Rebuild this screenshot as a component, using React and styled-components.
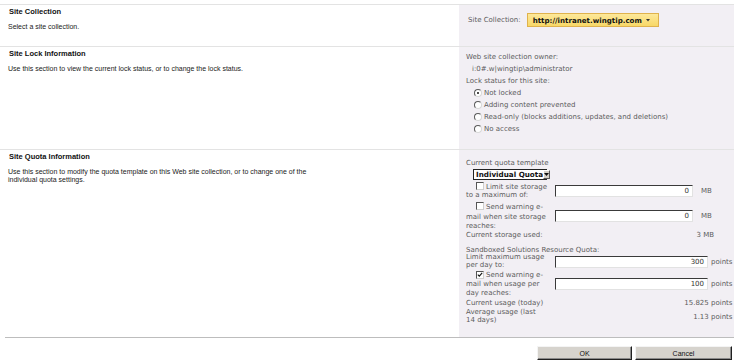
import React from 'react';
import styled, { createGlobalStyle } from 'styled-components';

const GlobalStyle = createGlobalStyle`
  html, body { margin: 0; padding: 0; background: #fff; }
  body {
    font-family: "DejaVu Sans", Verdana, sans-serif;
    -webkit-font-smoothing: antialiased;
  }
`;

const Page = styled.div`
  width: 734px;
  padding-top: 4px;
`;

const Section = styled.div`
  display: grid;
  grid-template-columns: 459px 275px;
  border-top: 1px solid #e3e3e3;
  min-height: ${p => p.$h}px;
`;

const Info = styled.div`
  padding: 3px 0 0 8px;
  font-family: "Liberation Sans", Tahoma, sans-serif;
  color: #222;
`;

const InfoTitle = styled.div`
  font-weight: bold;
  font-size: 7.5px;
  line-height: 8px;
  margin: 0 0 7px 1px;
  color: #111;
`;

const InfoText = styled.div`
  font-size: 7px;
  line-height: 7.6px;
  max-width: 305px;
`;

const Panel = styled.div`
  background: #f2eff4;
  padding: ${p => p.$pad};
  font-size: 7px;
  color: #5c5c5c;
`;

const Inline = styled.div`
  display: flex;
  align-items: center;
  gap: 6px;
  padding-left: 9px;
`;

const SiteDropdown = styled.div`
  height: 12px;
  display: flex;
  align-items: center;
  gap: 4px;
  padding: 0 8px 0 5px;
  background: linear-gradient(#fde89a, #f8d867);
  border: 1px solid #dfb24d;
  font-weight: bold;
  font-size: 7.1px;
  color: #111;
`;

const Line = styled.div`
  line-height: 11.8px;
  padding-left: ${p => p.$indent || 0}px;
`;

const RadioRow = styled.div`
  display: flex;
  align-items: center;
  gap: 2px;
  height: 11.8px;
  padding-left: 8px;
`;

const Radio = styled.span`
  position: relative;
  width: 6px;
  height: 6px;
  border-radius: 50%;
  background: #fff;
  border: 1px solid;
  border-color: #5a5a5a #d8d8d8 #d8d8d8 #5a5a5a;
  &::after {
    content: '';
    display: ${p => (p.$on ? 'block' : 'none')};
    position: absolute;
    left: 2px;
    top: 2px;
    width: 2px;
    height: 2px;
    border-radius: 50%;
    background: #111;
  }
`;

const Check = styled.span`
  display: inline-flex;
  align-items: center;
  justify-content: center;
  width: 6px;
  height: 6px;
  background: #fff;
  border: 1px solid;
  border-color: #555 #cfcfcf #cfcfcf #555;
  margin: 0 2px 0 10px;
  vertical-align: -1px;
`;

const SelectBox = styled.div`
  display: flex;
  align-items: center;
  justify-content: space-between;
  width: 72px;
  margin: 2px 0 0 7px;
  height: 9px;
  border: 1px solid #222;
  background: #fff;
  color: #111;
  font-size: 7.2px;
  font-weight: bold;
`;

const SelectText = styled.span`
  padding-left: 2px;
  white-space: nowrap;
`;

const SelectArrow = styled.span`
  display: flex;
  align-items: center;
  justify-content: center;
  width: 8px;
  height: 7px;
  margin-right: 1px;
  background: #d4d0c8;
  border: 1px solid;
  border-color: #fff #555 #555 #fff;
`;

const QuotaGrid = styled.div`
  display: grid;
  grid-template-columns: 89px ${p => p.$box}px auto;
  width: ${p => p.$w}px;
  align-items: center;
  margin-top: ${p => p.$top || 0}px;
`;

const Label = styled.div`
  min-height: ${p => p.$h || 0}px;
  display: flex;
  flex-direction: column;
  justify-content: center;
  white-space: nowrap;
`;

const SubLine = styled.div`
  line-height: ${p => p.$lh || 7.8}px;
`;

const Field = styled.div`
  height: 10px;
  background: #fff;
  border: 1px solid;
  border-color: #3a3a3a #e2e2e2 #e2e2e2 #3a3a3a;
  text-align: right;
  padding-right: 3px;
  line-height: 10px;
  color: #333;
`;

const Unit = styled.div`
  padding-left: ${p => p.$pad}px;
  white-space: nowrap;
`;

const Value = styled.div`
  grid-column: 2 / 4;
  text-align: right;
`;

const Heading = styled.div`
  line-height: 8px;
  margin-top: ${p => p.$top || 0}px;
`;

const Footer = styled.div`
  margin-left: 5px;
  border-top: 1px solid #bdbdbd;
  box-shadow: 0 1px 0 #e2e2e2;
  display: flex;
  justify-content: flex-end;
  gap: 3px;
  padding: 8px 2px 0 0;
`;

const Button = styled.button`
  width: ${p => p.$w}px;
  height: 14px;
  padding: 0;
  background: #d6d3cd;
  border: 1px solid;
  border-color: #f4f4f4 #202020 #202020 #f4f4f4;
  box-shadow: inset -1px -1px 0 #8a8a8a;
  font-family: "Liberation Sans", Tahoma, sans-serif;
  font-size: 7px;
  color: #111;
`;

function Tick() {
  return (
    <svg width="6" height="6" viewBox="0 0 6 6">
      <path d="M0.8 2.6 L2.3 4.2 L5.2 0.9" stroke="#111" strokeWidth="1.1" fill="none" />
    </svg>
  );
}

export default function App() {
  const lockOptions = [
    ['Not locked', true],
    ['Adding content prevented', false],
    ['Read-only (blocks additions, updates, and deletions)', false],
    ['No access', false],
  ];

  return (
    <Page>
      <GlobalStyle />
      <Section $h={41}>
        <Info>
          <InfoTitle>Site Collection</InfoTitle>
          <InfoText>Select a site collection.</InfoText>
        </Info>
        <Panel $pad="8px 0 0 0">
          <Inline>
            <span>Site Collection:</span>
            <SiteDropdown>
              <span>http://intranet.wingtip.com</span>
              <svg width="4" height="3" viewBox="0 0 4 3"><path d="M0 0 H4 L2 2.5 Z" fill="#333" /></svg>
            </SiteDropdown>
          </Inline>
        </Panel>
      </Section>

      <Section $h={102}>
        <Info>
          <InfoTitle>Site Lock Information</InfoTitle>
          <InfoText>Use this section to view the current lock status, or to change the lock status.</InfoText>
        </Info>
        <Panel $pad="5px 0 0 7px">
          <Line>Web site collection owner:</Line>
          <Line $indent={6}>i:0#.w|wingtip{'\\'}administrator</Line>
          <Line>Lock status for this site:</Line>
          {lockOptions.map(([text, on]) => (
            <RadioRow key={text}>
              <Radio $on={on} />
              <span>{text}</span>
            </RadioRow>
          ))}
        </Panel>
      </Section>

      <Section $h={187}>
        <Info>
          <InfoTitle>Site Quota Information</InfoTitle>
          <InfoText>
            Use this section to modify the quota template on this Web site collection, or to change one of the
            individual quota settings.
          </InfoText>
        </Info>
        <Panel $pad="9px 0 0 7px">
          <Heading>Current quota template</Heading>
          <SelectBox>
            <SelectText>Individual Quota</SelectText>
            <SelectArrow>
              <svg width="5" height="3" viewBox="0 0 5 3"><path d="M0 0 H5 L2.5 3 Z" fill="#111" /></svg>
            </SelectArrow>
          </SelectBox>

          <QuotaGrid $box={138} $w={248} $top={1}>
            <Label $h={20}>
              <SubLine $lh={10}><Check />Limit site storage</SubLine>
              <SubLine>to a maximum of:</SubLine>
            </Label>
            <Field>0</Field>
            <Unit $pad={8}>MB</Unit>

            <Label $h={30}>
              <SubLine $lh={12}><Check />Send warning e-</SubLine>
              <SubLine $lh={9}>mail when site storage</SubLine>
              <SubLine $lh={9}>reaches:</SubLine>
            </Label>
            <Field>0</Field>
            <Unit $pad={8}>MB</Unit>

            <Label $h={7}>Current storage used:</Label>
            <Value>3 MB</Value>
          </QuotaGrid>

          <Heading $top={7}>Sandboxed Solutions Resource Quota:</Heading>
          <QuotaGrid $box={153} $w={260}>
            <Label $h={16}>
              <SubLine>Limit maximum usage</SubLine>
              <SubLine>per day to:</SubLine>
            </Label>
            <Field>300</Field>
            <Unit $pad={3}>points</Unit>

            <Label $h={27}>
              <SubLine $lh={10}><Check><Tick /></Check>Send warning e-</SubLine>
              <SubLine $lh={9}>mail when usage per</SubLine>
              <SubLine $lh={8}>day reaches:</SubLine>
            </Label>
            <Field>100</Field>
            <Unit $pad={3}>points</Unit>

            <Label $h={12}>Current usage (today)</Label>
            <Value>15.825 points</Value>

            <Label $h={15}>
              <SubLine $lh={7.5}>Average usage (last</SubLine>
              <SubLine $lh={7.5}>14 days)</SubLine>
            </Label>
            <Value>1.13 points</Value>
          </QuotaGrid>
        </Panel>
      </Section>

      <Footer>
        <Button $w={95}>OK</Button>
        <Button $w={97}>Cancel</Button>
      </Footer>
    </Page>
  );
}
